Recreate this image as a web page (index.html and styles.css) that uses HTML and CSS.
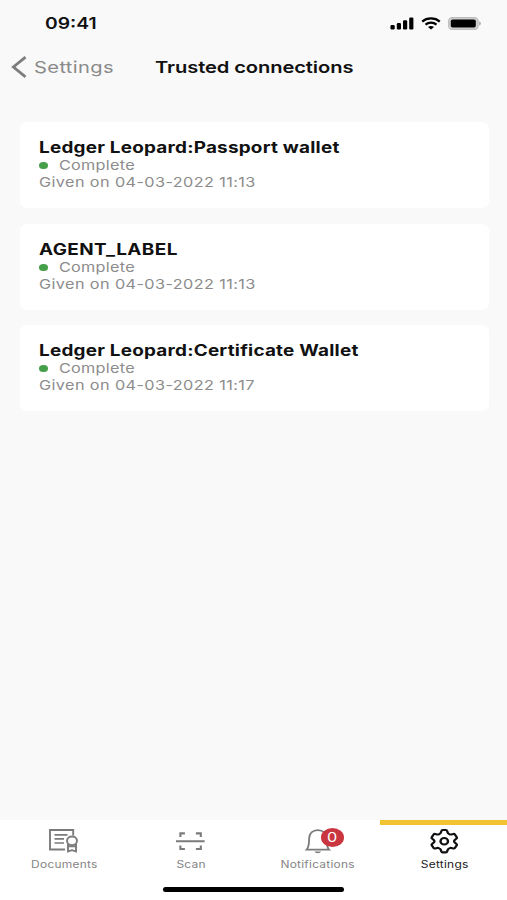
FILE: index.html
```html
<!DOCTYPE html>
<html lang="en">
<head>
    <meta charset="UTF-8">
    <meta name="viewport" content="width=device-width, initial-scale=1.0">
    <title>Trusted connections</title>
    <link rel="stylesheet" href="styles.css">
</head>
<body>
    <div class="screen">
        <div class="status-bar">
            <span class="time wide">09:41</span>
            <div class="status-icons">
                <svg width="24" height="13" viewBox="0 0 24 13">
                    <rect x="0.5" y="8" width="4.2" height="4.4" rx="1.2"/>
                    <rect x="6.8" y="6" width="4.2" height="6.4" rx="1.2"/>
                    <rect x="13" y="3.3" width="4.2" height="9.1" rx="1.2"/>
                    <rect x="19.2" y="0.6" width="4.2" height="11.8" rx="1.2"/>
                </svg>
                <svg width="20" height="13" viewBox="0 0 20 13" fill="none" stroke="#000" stroke-width="2.2">
                    <path d="M1.2 4.6C6 0.4 14 0.4 18.8 4.6"/>
                    <path d="M4.5 7.6C7.6 5 12.4 5 15.5 7.6"/>
                    <path d="M7 10.1C8.8 8.7 11.2 8.7 13 10.1L10 12.5Z" fill="#000" stroke="none"/>
                </svg>
                <svg width="34" height="13" viewBox="0 0 34 13">
                    <rect x="0.7" y="0.6" width="29.4" height="11.8" rx="3.6" fill="#d0d0d0" stroke="#bcbcbc" stroke-width="1.2"/>
                    <rect x="2.8" y="2.4" width="25" height="8.2" rx="1.8"/>
                    <path d="M31.2 4.5C33.4 5.2 33.4 7.8 31.2 8.5Z" fill="#aaa"/>
                </svg>
            </div>
        </div>

        <div class="header">
            <svg class="back-icon" width="16" height="22" viewBox="0 0 16 22" fill="none" stroke="#7d7d7d" stroke-width="2.8">
                <path d="M14.5 1.2L2.4 11L14.5 20.8"/>
            </svg>
            <span class="back-label wide">Settings</span>
            <h1 class="wide">Trusted connections</h1>
        </div>

        <div class="connections">
            <div class="card">
                <h2 class="wide">Ledger Leopard:Passport wallet</h2>
                <p class="status"><span class="dot"></span><span class="wide">Complete</span></p>
                <p class="given wide">Given on 04-03-2022 11:13</p>
            </div>
            <div class="card">
                <h2 class="wide agent">AGENT_LABEL</h2>
                <p class="status"><span class="dot"></span><span class="wide">Complete</span></p>
                <p class="given wide">Given on 04-03-2022 11:13</p>
            </div>
            <div class="card">
                <h2 class="wide">Ledger Leopard:Certificate Wallet</h2>
                <p class="status"><span class="dot"></span><span class="wide">Complete</span></p>
                <p class="given wide">Given on 04-03-2022 11:17</p>
            </div>
        </div>

        <div class="tab-bar">
            <div class="tab">
                <svg width="30" height="26" viewBox="0 0 30 26" fill="none" stroke="#7b7b7b" stroke-width="1.9">
                    <path d="M17 21.5H2V2H25.2V7.5"/>
                    <path d="M6.5 6.8H19.5M6.5 10.8H16M6.5 15H16" stroke-width="1.7"/>
                    <ellipse cx="24" cy="12.8" rx="5" ry="4.3"/>
                    <path d="M20 16V23.4L24 22.2L28 23.4V16M20 18.2H28"/>
                </svg>
                <span class="label">Documents</span>
            </div>
            <div class="tab">
                <svg width="30" height="26" viewBox="0 0 30 26" fill="none" stroke="#7b7b7b" stroke-width="2.1">
                    <path d="M5.4 9V5.4H9.9M20.9 5.4H25.8V9M5.4 17.4V21H9.9M20.9 21H25.8V17.4M1 13.2H29.6"/>
                </svg>
                <span class="label">Scan</span>
            </div>
            <div class="tab">
                <svg width="30" height="26" viewBox="0 0 30 26" fill="none" stroke="#7b7b7b" stroke-width="1.8">
                    <path d="M4.7 21.6H27C24.6 19.2 24.5 16.5 24.5 10.8C24.5 5.4 21 2.2 15.8 2.2C10.6 2.2 7.1 5.4 7.1 10.8C7.1 16.5 7 19.2 4.7 21.6Z"/>
                    <path d="M12.6 23.4H19C18.4 25.7 13.2 25.7 12.6 23.4Z" fill="#7b7b7b" stroke="none"/>
                </svg>
                <span class="badge"><span class="badge-count">0</span></span>
                <span class="label">Notifications</span>
            </div>
            <div class="tab active">
                <svg width="30" height="26" viewBox="0 0 24 24" preserveAspectRatio="none" fill="none" stroke="#111" stroke-width="1.9" stroke-linejoin="round">
                    <path d="M10.9 1.9H13.5Q14.3 1.9 14.5 2.7L15 4.4Q15.2 5.1 15.9 5.4L16.6 5.8Q17.2 6.2 17.9 6L19.5 5.5Q20.3 5.3 20.7 6L22.2 8.5Q22.6 9.2 22 9.7L20.6 11Q20.1 11.5 20.1 12.2T20.6 13.4L22 14.7Q22.6 15.2 22.2 15.9L20.7 18.4Q20.3 19.1 19.5 18.9L17.9 18.4Q17.2 18.2 16.6 18.6L15.9 19Q15.2 19.3 15 20L14.5 21.7Q14.3 22.5 13.5 22.5H10.9Q10.1 22.5 9.9 21.7L9.4 20Q9.2 19.3 8.5 19L7.8 18.6Q7.2 18.2 6.5 18.4L4.9 18.9Q4.1 19.1 3.7 18.4L2.2 15.9Q1.8 15.2 2.4 14.7L3.8 13.4Q4.3 12.9 4.3 12.2T3.8 11L2.4 9.7Q1.8 9.2 2.2 8.5L3.7 6Q4.1 5.3 4.9 5.5L6.5 6Q7.2 6.2 7.8 5.8L8.5 5.4Q9.2 5.1 9.4 4.4L9.9 2.7Q10.1 1.9 10.9 1.9Z"/>
                    <circle cx="12.2" cy="12.2" r="3"/>
                </svg>
                <span class="label">Settings</span>
            </div>
        </div>
        <div class="home-area">
            <div class="home-indicator"></div>
        </div>
    </div>
</body>
</html>
```
FILE: styles.css
```css
body {
    margin: 0;
    font-family: 'Inter', 'Liberation Sans', sans-serif;
    background: #f9f9f9;
    color: #111;
}

.screen {
    width: 507px;
    height: 900px;
    display: flex;
    flex-direction: column;
    overflow: hidden;
}

h1, h2, p {
    margin: 0;
}

/* extended letterforms */
.wide {
    display: block;
    white-space: nowrap;
    transform: scaleX(1.22);
    transform-origin: left center;
}

.status-bar {
    height: 47px;
    padding: 0 25px 0 45px;
    display: flex;
    align-items: center;
    justify-content: space-between;
}

.time {
    font-size: 15.8px;
    font-weight: 600;
    line-height: 20px;
}

.status-icons {
    display: flex;
    gap: 7px;
}

.header {
    height: 40px;
    padding-left: 11px;
    display: grid;
    grid-template-columns: 23px 121px 1fr;
    align-items: center;
}

.back-label {
    font-size: 16.5px;
    letter-spacing: 0.3px;
    color: #8a8a8a;
}

h1 {
    font-size: 16.5px;
    font-weight: 600;
    letter-spacing: -0.08px;
}

.connections {
    flex: 1;
    padding: 35px 18px 0 20px;
    display: flex;
    flex-direction: column;
    gap: 15.5px;
}

.card {
    height: 86px;
    padding: 16px 19px 0;
    box-sizing: border-box;
    background: #fff;
    border-radius: 8px / 6px;
}

h2 {
    font-size: 15.5px;
    font-weight: 700;
    line-height: 19px;
    letter-spacing: 0.18px;
}

.agent {
    letter-spacing: 0.35px;
}

.status {
    display: flex;
    align-items: center;
    gap: 11px;
}

.status, .given {
    font-size: 13.3px;
    line-height: 17px;
    color: #8c8c8c;
}

.status {
    letter-spacing: 0.22px;
}

.given {
    letter-spacing: 0.33px;
}

.dot {
    width: 8.5px;
    height: 7px;
    border-radius: 50%;
    background: #46a04a;
}

.tab-bar {
    height: 55px;
    display: grid;
    grid-template-columns: repeat(4, 1fr);
    background: #fff;
}

.tab {
    position: relative;
    padding-top: 8px;
    display: flex;
    flex-direction: column;
    align-items: center;
    color: #858585;
}

.label {
    margin-top: 3px;
    padding-left: 1px;
    font-size: 9.8px;
    line-height: 15px;
    letter-spacing: 0.2px;
    transform: scaleX(1.22);
}

.active {
    color: #222;
}

.active::before {
    content: '';
    position: absolute;
    top: 0;
    left: 0;
    width: 100%;
    height: 4.5px;
    background: #f1c232;
}

.badge {
    position: absolute;
    top: 7.5px;
    left: 67px;
    width: 23px;
    height: 19px;
    display: flex;
    align-items: center;
    justify-content: center;
    border-radius: 50%;
    background: #c9363f;
    color: #fff;
}

.badge-count {
    font-size: 13.3px;
    transform: scaleX(1.22);
}

.home-area {
    height: 25px;
    display: flex;
    justify-content: center;
    background: #fff;
}

.home-indicator {
    width: 181px;
    height: 5px;
    margin-top: 12px;
    border-radius: 3px;
    background: #000;
}
```
